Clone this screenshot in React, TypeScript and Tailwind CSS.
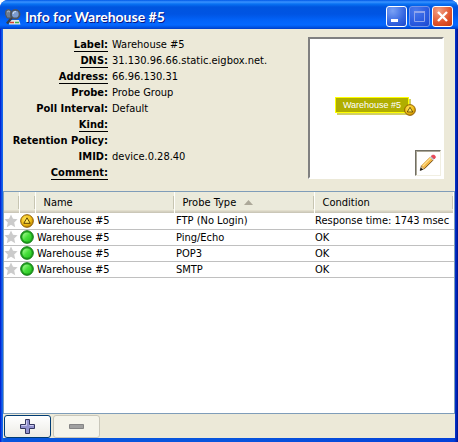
import type { ReactNode } from "react";

type InfoRow = { label: string; value: string; link?: boolean };

const info: InfoRow[] = [
  { label: "Label:", value: "Warehouse #5", link: true },
  { label: "DNS:", value: "31.130.96.66.static.eigbox.net.", link: true },
  { label: "Address:", value: "66.96.130.31", link: true },
  { label: "Probe:", value: "Probe Group" },
  { label: "Poll Interval:", value: "Default" },
  { label: "Kind:", value: "", link: true },
  { label: "Retention Policy:", value: "" },
  { label: "IMID:", value: "device.0.28.40" },
  { label: "Comment:", value: "", link: true },
];

const probes = [
  { name: "Warehouse #5", type: "FTP (No Login)", condition: "Response time: 1743 msec", alarm: true },
  { name: "Warehouse #5", type: "Ping/Echo", condition: "OK", alarm: false },
  { name: "Warehouse #5", type: "POP3", condition: "OK", alarm: false },
  { name: "Warehouse #5", type: "SMTP", condition: "OK", alarm: false },
];

function AppIcon() {
  return (
    <svg width="16" height="16" viewBox="0 0 16 16" aria-hidden="true">
      <path d="M5 11h9l1.5 4.5H4Z" fill="#e4e8ea" />
      <path d="M5 13.5h4" stroke="#d8402f" strokeWidth="1.6" />
      <path d="M10 13.5h4" stroke="#3fb04d" strokeWidth="1.6" />
      <path d="M7.5 8 L2 14.5" stroke="#3a3f48" strokeWidth="2.6" />
      <path d="M1 1.5 Q4 -1 6 2 L6 9 L2 9 Q-.5 5 1 1.5Z" fill="#6f7d92" stroke="#4b535f" strokeWidth="1" />
      <path d="M2 3 Q3.5 1.5 5 3" stroke="#aebbd0" fill="none" />
      <circle cx="10.3" cy="5.2" r="4.3" fill="#7c9cd0" stroke="#4c545f" strokeWidth="1.8" />
      <path d="M8 5a2.6 2.6 0 0 1 3-2.4" stroke="#d4e2f5" fill="none" />
    </svg>
  );
}

function AlarmIcon({ size }: { size: number }) {
  return (
    <svg width={size} height={size} viewBox="0 0 14 14" className="block" aria-hidden="true">
      <defs>
        <radialGradient id="gold" cx="0.4" cy="0.35" r="0.7">
          <stop offset="0" stopColor="#ffe45a" />
          <stop offset="0.6" stopColor="#f0bd14" />
          <stop offset="1" stopColor="#b57c00" />
        </radialGradient>
      </defs>
      <circle cx="7" cy="7" r="6.3" fill="url(#gold)" stroke="#8a5a00" />
      <path d="M7 3.8 L10.2 9.3 H3.8Z" fill="#ffe75c" stroke="#5e4100" strokeLinejoin="round" />
    </svg>
  );
}

function OkIcon() {
  return (
    <svg width="14" height="14" viewBox="0 0 14 14" className="block" aria-hidden="true">
      <defs>
        <linearGradient id="green" x1="0" y1="0" x2="1" y2="1">
          <stop offset="0" stopColor="#b4ffa0" />
          <stop offset="0.5" stopColor="#48e03c" />
          <stop offset="1" stopColor="#22c01f" />
        </linearGradient>
      </defs>
      <circle cx="7" cy="7" r="6.3" fill="#22a51f" stroke="#107a12" />
      <circle cx="7" cy="7" r="4.6" fill="url(#green)" />
    </svg>
  );
}

function Star() {
  return (
    <svg width="14" height="14" viewBox="0 0 14 14" className="block" aria-hidden="true">
      <path d="M7 .5 9 4.8 13.6 5.3 10.2 8.5 11.2 13.2 7 10.8 2.8 13.2 3.8 8.5 .4 5.3 5 4.8Z" fill="#cbcbcb" />
    </svg>
  );
}

function Pencil() {
  return (
    <svg width="18" height="18" viewBox="0 0 18 18" aria-hidden="true">
      <path d="M1.2 16.2 L2.4 11.8 L5.4 14.8Z" fill="#f6d9a4" stroke="#5d431c" strokeWidth=".6" />
      <path d="M.8 16.8 L1.8 13.4 L4.2 15.8Z" fill="#151515" />
      <path d="M2.4 11.8 L11 3.2 L14 6.2 L5.4 14.8Z" fill="#f2b544" />
      <path d="M5.4 14.8 L14 6.2" stroke="#6e4a14" strokeWidth="1" />
      <path d="M2.4 11.8 L11 3.2" stroke="#c98f2c" strokeWidth=".6" />
      <path d="M3.8 12 L11.8 4" stroke="#ffe08e" strokeWidth="1.2" />
      <path d="M11 3.2 L12.4 1.8 L15.4 4.8 L14 6.2Z" fill="#b9bec4" />
      <path d="M12.2 2 Q14 .2 15.8 1.4 Q17.6 3.2 15.2 5Z" fill="#ee4858" stroke="#d0384a" strokeWidth=".5" />
    </svg>
  );
}

function TitleButton({ label, tone, children }: { label: string; tone: string; children: ReactNode }) {
  return (
    <button type="button" aria-label={label} className={`flex size-[21px] items-center justify-center rounded-[3px] border ${tone}`}>
      <svg width="19" height="19" viewBox="0 0 19 19" aria-hidden="true">
        {children}
      </svg>
    </button>
  );
}

const th =
  "relative p-0 pl-2 text-left font-normal border-r border-[#fffffb] shadow-[inset_0_-1px_#cbc7b8,inset_0_-2px_#d6d2c2,inset_0_-3px_#e2decd]";

function Divider() {
  return <span className="absolute top-1 right-0 h-[13px] w-px bg-[#c7c5b2]" />;
}

export default function App() {
  return (
    <main className="flex min-h-screen flex-col overflow-hidden rounded-t-lg bg-[linear-gradient(90deg,#0019cf_0,#0831d9_1px,#166aee_2px,#0855dd_4px,#0855dd_50%,#0441d8_calc(100%-4px),#0029c0_calc(100%-2px),#00138c_100%)] font-['DejaVu_Sans_Condensed','DejaVu_Sans',sans-serif] text-[11px] leading-4 text-black">
      <header className="flex h-[29px] shrink-0 items-center justify-between bg-[linear-gradient(#0058e6_0,#3a93ff_2px,#0872f3_4px,#0055df_7px,#0054e3_14px,#0262f8_20px,#0468ff_25px,#0055e5_27px,#003dc8_29px)] pt-1 pr-[5px] pl-[5px]">
        <div className="flex items-center gap-1">
          <AppIcon />
          <h1 className="font-['Lato',sans-serif] text-[14px] font-bold text-white [text-shadow:1px_1px_#0a1883]">
            Info for Warehouse #5
          </h1>
        </div>
        <div className="flex gap-[2px]">
          <TitleButton label="Minimize" tone="border-white bg-[radial-gradient(circle_at_30%_20%,#7aa2f5,#3465e0_60%,#1c47cc)]">
            <path d="M4 12h7v3h-7z" fill="#fff" />
          </TitleButton>
          <TitleButton label="Maximize" tone="border-[#7595e8] bg-[radial-gradient(circle_at_30%_20%,#4b7aec,#2a5be0_60%,#1b48cf)]">
            <path d="M4.5 5v9.5h10V5M4 5h11" fill="none" stroke="#8ea4ec" strokeWidth="1" />
            <path d="M4 4h11v2H4z" fill="#8ea4ec" />
          </TitleButton>
          <TitleButton label="Close" tone="border-white bg-[radial-gradient(circle_at_30%_20%,#f1a085,#e0532a_60%,#c53a10)]">
            <path d="M5 5l9 9M14 5l-9 9" stroke="#fff" strokeWidth="2.4" />
          </TitleButton>
        </div>
      </header>

      <div className="mx-[3px] mb-1 flex flex-1 flex-col bg-[#ece9d8]">
        <section className="flex items-start justify-between pt-2 pr-[11px] pb-[10px]">
          <dl className="grid grid-cols-[105px_auto] gap-x-1">
            {info.map((row) => (
              <div key={row.label} className="contents">
                <dt className="h-4 text-right font-bold whitespace-nowrap">
                  {row.link ? (
                    <a href="#edit" className="inline-block h-[15px] border-b border-black leading-[15px]">
                      {row.label}
                    </a>
                  ) : (
                    row.label
                  )}
                </dt>
                <dd className="h-4 whitespace-nowrap">{row.value}</dd>
              </div>
            ))}
          </dl>
          <div className="relative flex h-[142px] w-[136px] items-center justify-center border-2 border-t-[#808080] border-r-white border-b-white border-l-[#808080] bg-white">
            <div className="relative mr-2 mb-1.5 border border-[#ffff00] bg-[#b0ae00] px-[7px] font-['Liberation_Sans',sans-serif] text-[9px] leading-[14px] whitespace-nowrap text-white shadow-[2px_2px_#d2cf63]">
              Warehouse #5
              <span className="absolute -right-2 -bottom-1">
                <AlarmIcon size={12} />
              </span>
            </div>
            <button
              type="button"
              aria-label="Edit"
              className="absolute right-[1px] bottom-[1px] flex size-[26px] items-center justify-center border border-t-[#716f64] border-r-[#f1efe2] border-b-[#f1efe2] border-l-[#716f64] bg-white shadow-[inset_1px_1px_#aca899]"
            >
              <Pencil />
            </button>
          </div>
        </section>

        <section className="flex-1 border border-[#7f9db9] bg-white">
          <table className="w-full table-fixed border-collapse">
            <colgroup>
              <col className="w-[15px]" />
              <col className="w-4" />
              <col className="w-[139px]" />
              <col className="w-[140px]" />
              <col />
            </colgroup>
            <thead>
              <tr className="h-[21px] bg-[#ebeadb]">
                <th className={th} aria-label="Starred"><Divider /></th>
                <th className={th} aria-label="Status"><Divider /></th>
                <th className={th}>Name<Divider /></th>
                <th className={th}>
                  <span className="flex items-center gap-2">
                    Probe Type
                    <svg width="9" height="5" viewBox="0 0 9 5" aria-hidden="true">
                      <path d="M4.5 0 9 5H0Z" fill="#aca899" />
                    </svg>
                  </span>
                  <Divider />
                </th>
                <th className={th}>Condition<Divider /></th>
              </tr>
            </thead>
            <tbody>
              {probes.map((p) => (
                <tr key={p.type} className="h-4 border-b border-[#c0c0c0] leading-[15px]">
                  <td className="p-0"><Star /></td>
                  <td className="p-0 pl-px">{p.alarm ? <AlarmIcon size={14} /> : <OkIcon />}</td>
                  <td className="p-0 pl-[2px]">{p.name}</td>
                  <td className="p-0 pl-[2px]">{p.type}</td>
                  <td className="p-0 pl-[1px] whitespace-nowrap">{p.condition}</td>
                </tr>
              ))}
            </tbody>
          </table>
        </section>

        <footer className="flex gap-[2px] px-px pt-px">
          <button type="button" aria-label="Add" className="flex h-[23px] w-[47px] items-center justify-center rounded-[3px] border border-[#003c74] bg-linear-to-b from-white to-[#ecebe5]">
            <svg width="15" height="15" viewBox="0 0 15 15" aria-hidden="true">
              <path d="M5.5.5h4v5h5v4h-5v5h-4v-5h-5v-4h5z" fill="#9291ce" stroke="#343660" />
              <path d="M6.5 1.5v5h-5M9.5 6.5h4" fill="none" stroke="#cdccf0" />
            </svg>
          </button>
          <button type="button" aria-label="Remove" disabled className="flex h-[23px] w-[47px] items-center justify-center rounded-[3px] border border-[#c9c7ba] bg-[#f5f4ea]">
            <svg width="15" height="5" viewBox="0 0 15 5" aria-hidden="true">
              <path d="M.5.5h14v4H.5z" fill="#a0a0a0" stroke="#858585" />
            </svg>
          </button>
        </footer>
      </div>
    </main>
  );
}
